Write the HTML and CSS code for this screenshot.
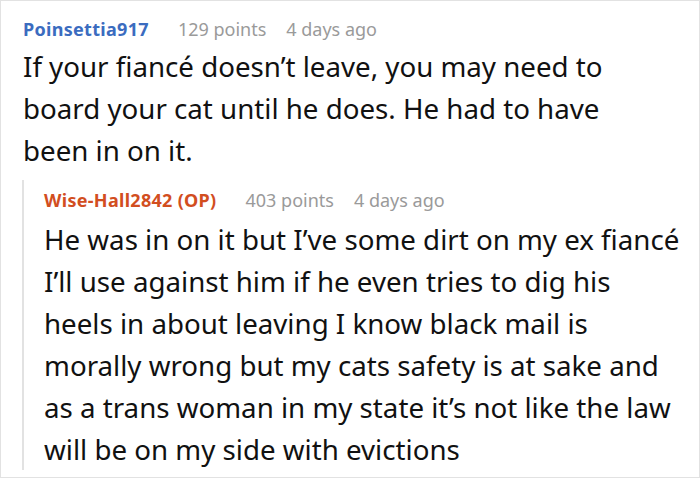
FILE: index.html
```html
<!DOCTYPE html>
<html>
<head>
<meta charset="utf-8">
<link rel="stylesheet" href="styles.css">
</head>
<body>
<div class="frame">
  <div class="comment">
    <div class="meta">
      <span class="user">Poinsettia917</span>
      <span class="info">129 points</span>
      <span class="info">4 days ago</span>
    </div>
    <p class="text">If your fiancé doesn’t leave, you may need to board your cat until he does. He had to have been in on it.</p>
    <div class="reply">
      <div class="meta">
        <span class="user op">Wise-Hall2842 (OP)</span>
        <span class="info">403 points</span>
        <span class="info">4 days ago</span>
      </div>
      <p class="text">He was in on it but I’ve some dirt on my ex fiancé<br>I’ll use against him if he even tries to dig his<br>heels in about leaving I know black mail is<br>morally wrong but my cats safety is at sake and<br>as a trans woman in my state it’s not like the law<br>will be on my side with evictions</p>
    </div>
  </div>
</div>
</body>
</html>
```

FILE: styles.css
```css
html, body {
  margin: 0;
  padding: 0;
  background: #fff;
}
.frame {
  width: 700px;
  height: 478px;
  box-sizing: border-box;
  border: 1px solid #e2e2e2;
  padding: 15px 10px 0 22px;
  font-family: "Noto Sans", "Open Sans", sans-serif;
  color: #111;
  overflow: hidden;
}
.meta {
  display: flex;
  gap: 20px;
  font-size: 18px;
  line-height: 26px;
}
.user {
  font-weight: 700;
  color: #3b6cbf;
  margin-right: 9px;
  letter-spacing: 0.3px;
}
.user.op {
  color: #d24e1f;
}
.info {
  color: #9a9a9a;
}
.text {
  margin: 3px 0 0;
  padding-right: 60px;
  font-size: 27.7px;
  line-height: 42px;
}
.reply {
  margin: 9px 0 0 -1px;
  border-left: 2px solid #e2e2e2;
  padding: 7px 0 0 20px;
}
.reply .text {
  margin: 5px 0 -9px;
  padding-right: 0;
  font-size: 27.7px;
  white-space: nowrap;
}
```
